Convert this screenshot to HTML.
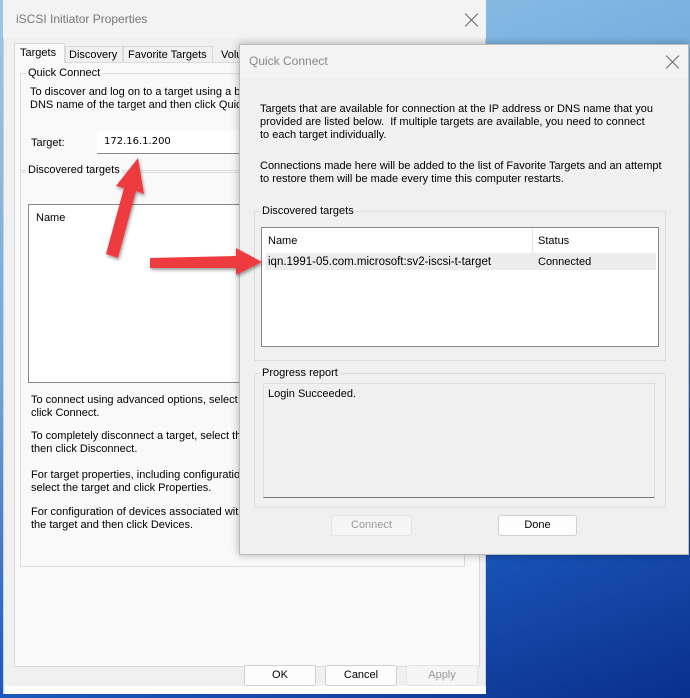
<!DOCTYPE html>
<html><head><style>
*{margin:0;padding:0;box-sizing:border-box}
body{width:690px;height:698px;overflow:hidden;position:relative;font-family:"Liberation Sans",sans-serif;font-size:11px;color:#000;
background:linear-gradient(160deg,#9cc8e8 0%,#6aa8dc 40%,#1d5fc4 70%,#0a2f8c 100%)}
.a{position:absolute}
.t{position:absolute;white-space:nowrap;line-height:13px}
.grp{position:absolute;border:1px solid #dcdcdc}
.lbl{position:absolute;background:#f0f0f0;padding:0 2px;line-height:13px}
.btn{position:absolute;border:1px solid #d0d0d0;border-radius:3px;background:#fdfdfd;text-align:center;line-height:19px}
.x{position:absolute;width:14px;height:14px}
.x:before,.x:after{content:"";position:absolute;left:6px;top:-2px;width:1px;height:18px;background:#666;transform:rotate(45deg)}
.x:after{transform:rotate(-45deg)}
</style></head><body>
<div class="a" style="left:3px;top:0;width:483px;height:694px;background:#f0f0f0;border:1px solid #cfcfcf"></div>
<div class="a" style="left:3px;top:0;width:483px;height:38px;background:#f3f3f3"></div>
<div class="t" style="left:16px;top:13px;font-size:12px;color:#777">iSCSI Initiator Properties</div>
<div class="x" style="left:465px;top:13px"></div>
<div class="a" style="left:14px;top:62px;width:466px;height:605px;border:1px solid #dadada;background:#f9f9f9"></div>
<div class="a" style="left:14px;top:43px;width:51px;height:20px;border:1px solid #dadada;border-bottom:none;background:#f9f9f9"></div>
<div class="t" style="left:20px;top:47px">Targets</div>
<div class="a" style="left:65px;top:46px;width:58px;height:16px;border:1px solid #dadada;border-bottom:none"></div>
<div class="t" style="left:69px;top:49px">Discovery</div>
<div class="a" style="left:123px;top:46px;width:90px;height:16px;border:1px solid #dadada;border-bottom:none"></div>
<div class="t" style="left:128px;top:49px">Favorite Targets</div>
<div class="t" style="left:221px;top:49px">Volu</div>
<div class="grp" style="left:20px;top:73px;width:462px;height:100px"></div>
<div class="lbl" style="left:26px;top:67px;background:#f9f9f9">Quick Connect</div>
<div class="t" style="left:30px;top:86px">To discover and log on to a target using a b</div>
<div class="t" style="left:30px;top:99px">DNS name of the target and then click Quick</div>
<div class="t" style="left:31px;top:137px">Target:</div>
<div class="a" style="left:97px;top:131px;width:150px;height:23px;background:#fff;border-bottom:1px solid #888"></div>
<div class="t" style="left:104px;top:135px;font-family:'DejaVu Sans',sans-serif;font-size:10px">172.16.1.200</div>
<div class="grp" style="left:20px;top:170px;width:445px;height:397px"></div>
<div class="lbl" style="left:26px;top:164px;background:#f9f9f9">Discovered targets</div>
<div class="a" style="left:28px;top:204px;width:220px;height:179px;background:#fff;border:1px solid #888"></div>
<div class="t" style="left:36px;top:212px">Name</div>
<div class="t" style="left:31px;top:394px">To connect using advanced options, select a</div>
<div class="t" style="left:31px;top:407px">click Connect.</div>
<div class="t" style="left:31px;top:430px">To completely disconnect a target, select th</div>
<div class="t" style="left:31px;top:443px">then click Disconnect.</div>
<div class="t" style="left:31px;top:469px">For target properties, including configuratio</div>
<div class="t" style="left:31px;top:482px">select the target and click Properties.</div>
<div class="t" style="left:31px;top:506px">For configuration of devices associated with</div>
<div class="t" style="left:31px;top:519px">the target and then click Devices.</div>
<div class="btn" style="left:244px;top:665px;width:72px;height:21px">OK</div>
<div class="btn" style="left:325px;top:665px;width:72px;height:21px">Cancel</div>
<div class="btn" style="left:406px;top:665px;width:72px;height:21px;color:#999;background:#f5f5f5;border-color:#e4e4e4">Apply</div>
<div class="a" style="left:5px;top:686px;width:481px;height:8px;background:#fff"></div>
<div class="a" style="left:239px;top:44px;width:450px;height:511px;background:#f0f0f0;border:1px solid #bbb;box-shadow:0 0 8px rgba(0,0,0,.3)"></div>
<div class="a" style="left:240px;top:45px;width:448px;height:33px;background:#f3f3f3"></div>
<div class="t" style="left:249px;top:55px;font-size:12px;color:#888">Quick Connect</div>
<div class="x" style="left:666px;top:55px"></div>
<div class="t" style="left:260px;top:103px">Targets that are available for connection at the IP address or DNS name that you</div>
<div class="t" style="left:260px;top:116px">provided are listed below.&nbsp; If multiple targets are available, you need to connect</div>
<div class="t" style="left:260px;top:129px">to each target individually.</div>
<div class="t" style="left:260px;top:160px">Connections made here will be added to the list of Favorite Targets and an attempt</div>
<div class="t" style="left:260px;top:173px">to restore them will be made every time this computer restarts.</div>
<div class="grp" style="left:254px;top:211px;width:412px;height:150px"></div>
<div class="lbl" style="left:260px;top:205px">Discovered targets</div>
<div class="a" style="left:261px;top:227px;width:398px;height:120px;background:#fff;border:1px solid #888"></div>
<div class="a" style="left:532px;top:229px;width:1px;height:24px;background:#e5e5e5"></div>
<div class="t" style="left:268px;top:235px">Name</div>
<div class="t" style="left:538px;top:235px">Status</div>
<div class="a" style="left:266px;top:253px;width:390px;height:17px;background:#ececec"></div>
<div class="t" style="left:268px;top:256px;font-size:11.5px">iqn.1991-05.com.microsoft:sv2-iscsi-t-target</div>
<div class="t" style="left:538px;top:256px">Connected</div>
<div class="grp" style="left:254px;top:373px;width:412px;height:135px"></div>
<div class="lbl" style="left:260px;top:367px">Progress report</div>
<div class="a" style="left:263px;top:383px;width:392px;height:115px;border:1px solid #ddd;border-bottom:1px solid #777;background:#f0f0f0"></div>
<div class="t" style="left:268px;top:388px">Login Succeeded.</div>
<div class="btn" style="left:331px;top:515px;width:81px;height:21px;color:#999;background:#f5f5f5;border-color:#e4e4e4">Connect</div>
<div class="btn" style="left:498px;top:515px;width:79px;height:21px">Done</div>
<svg class="a" style="left:0;top:0" width="690" height="698">
<defs><filter id="s"><feDropShadow dx="1" dy="2" stdDeviation="1.5" flood-opacity=".4"/></filter></defs>
<g fill="#ee3b3f" filter="url(#s)">
<polygon points="106,254 124,188 116,186 138,158 144,194 136,191 118,258"/>
<polygon points="150,258 236,256 236,248 262,262 236,275 236,268 150,268"/>
</g>
</svg>
</body></html>
